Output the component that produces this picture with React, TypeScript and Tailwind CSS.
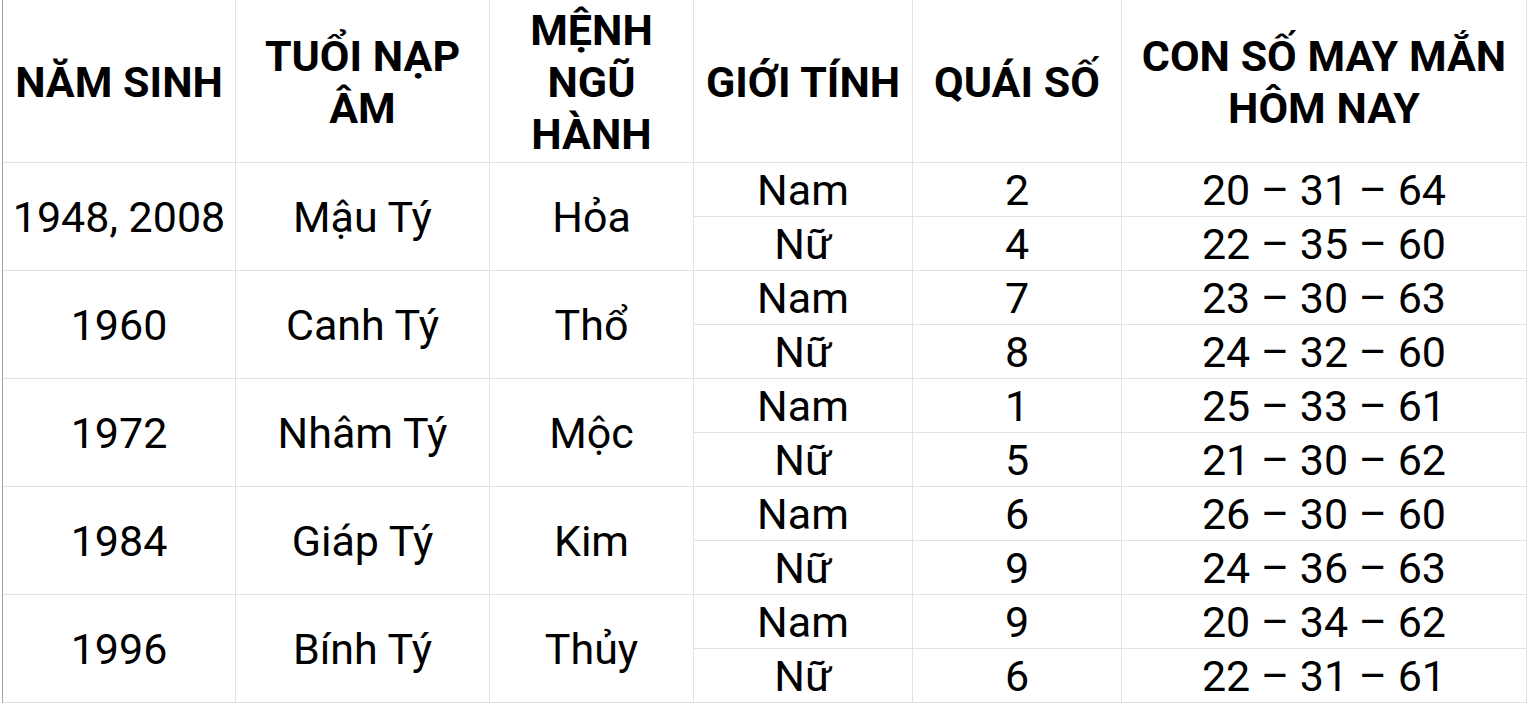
const groups = [
  { year: '1948, 2008', tuoi: 'Mậu Tý', menh: 'Hỏa', rows: [['Nam', '2', '20 – 31 – 64'], ['Nữ', '4', '22 – 35 – 60']] },
  { year: '1960', tuoi: 'Canh Tý', menh: 'Thổ', rows: [['Nam', '7', '23 – 30 – 63'], ['Nữ', '8', '24 – 32 – 60']] },
  { year: '1972', tuoi: 'Nhâm Tý', menh: 'Mộc', rows: [['Nam', '1', '25 – 33 – 61'], ['Nữ', '5', '21 – 30 – 62']] },
  { year: '1984', tuoi: 'Giáp Tý', menh: 'Kim', rows: [['Nam', '6', '26 – 30 – 60'], ['Nữ', '9', '24 – 36 – 63']] },
  { year: '1996', tuoi: 'Bính Tý', menh: 'Thủy', rows: [['Nam', '9', '20 – 34 – 62'], ['Nữ', '6', '22 – 31 – 61']] },
]

const headers = ['NĂM SINH', 'TUỔI NẠP ÂM', 'MỆNH NGŨ HÀNH', 'GIỚI TÍNH', 'QUÁI SỐ', 'CON SỐ MAY MẮN HÔM NAY']

const cell = 'flex items-center justify-center text-center border-r border-b border-[#e2e2e2]'

export default function App() {
  return (
    <div className="w-[1529px] h-[705px] bg-white overflow-hidden pl-[2px] font-['Roboto',sans-serif] text-black">
      <div className="grid grid-cols-[233px_254px_204px_219px_209px_405px] grid-rows-[163px_repeat(10,54px)] border-l border-[#a3a3a3] w-fit">
        {headers.map((h) => (
          <div key={h} className={`${cell} font-bold text-[43px] leading-[52px] px-1 pt-[2px]`}>
            {h}
          </div>
        ))}

        {groups.map((g) => (
          <>
            <div key={g.year} className={`${cell} row-span-2 text-[43px] leading-none pt-[2px]`}>{g.year}</div>
            <div className={`${cell} row-span-2 text-[43px] leading-none pt-[2px]`}>{g.tuoi}</div>
            <div className={`${cell} row-span-2 text-[43px] leading-none pt-[2px]`}>{g.menh}</div>
            {g.rows.map((r) => r.map((v, i) => (
              <div key={g.year + r[0] + i} className={`${cell} text-[43px] leading-none pt-[2px] ${i === 0 ? 'col-start-4' : ''}`}>{v}</div>
            )))}
          </>
        ))}
      </div>
    </div>
  )
}
